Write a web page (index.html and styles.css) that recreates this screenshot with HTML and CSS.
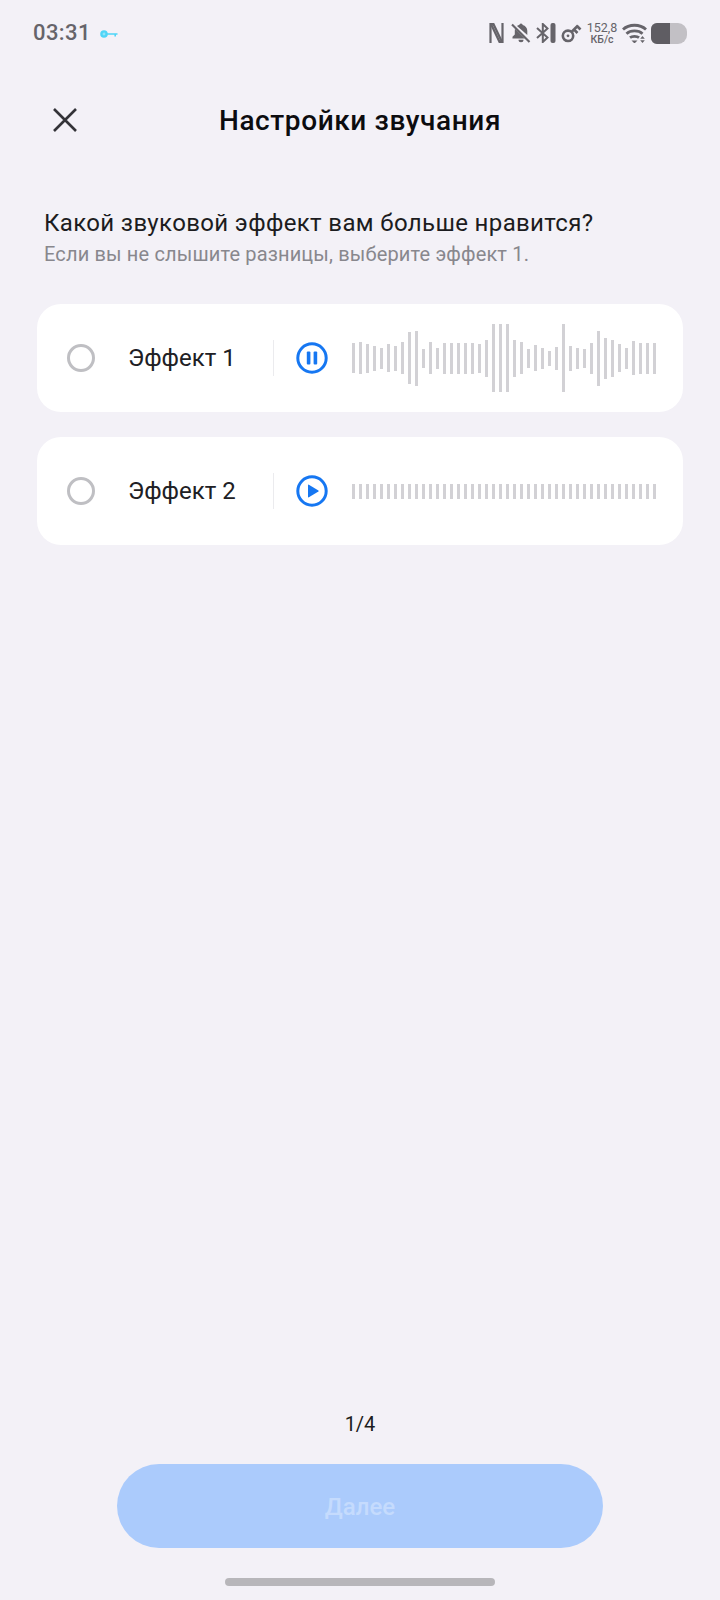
FILE: index.html
```html
<!DOCTYPE html>
<html lang="ru">
  <head>
    <meta charset="UTF-8" />
    <meta name="viewport" content="width=device-width, initial-scale=1.0" />
    <title>Настройки звучания</title>
    <link rel="stylesheet" href="styles.css">
  </head>
  <body>
    <div class="page">
      <!-- Status bar -->
      <div class="status-bar">
        <span class="time">03:31</span>
        <svg class="vpn-key" width="18" height="8" viewBox="0 0 18 8">
          <circle cx="4" cy="4" r="2.6" fill="#8fe4fa" stroke="#4fd5f7" stroke-width="2.4" />
          <path d="M7 3.2H17.5V4.8H16V6.6H14.4V4.8H7Z" fill="#4fd5f7" />
        </svg>
        <div class="status-icons">
          <svg width="15" height="20" viewBox="0 0 15 20" fill="none" stroke="#66646a" stroke-width="2.2">
            <path d="M1.5 20V1.2H4.5L13 19" />
            <path d="M13.5 0V18.8H10.500L2 1" />
          </svg>
          <svg class="gap-bell" width="20" height="20" viewBox="0 0 20 20" fill="#66646a">
            <path d="M10 .5a1.700 1.700 0 0 1 1.700 1.600c2.800.7 4.600 3 4.600 5.900v4L6 2.900c.7-.4 1.500-.7 2.300-.8A1.700 1.700 0 0 1 10 .5ZM4 5.700L13.800 15.500H1.500v-1.700l2.300-2.300V8c0-.8.100-1.600.2-2.300ZM7.500 16.800h5a2.500 2.500 0 0 1-5 0Z" />
            <path d="M1 1.500l17.500 17.500" fill="none" stroke="#66646a" stroke-width="2.2" />
          </svg>
          <svg class="gap-bt" width="20" height="20" viewBox="0 0 20 20" fill="none" stroke="#66646a" stroke-width="2">
            <path d="M1 5L11.500 14.500L6.800 19V1L11.500 5.500L1 15" />
            <rect x="14.500" y="0" width="5" height="20" rx="2" fill="#66646a" stroke="none" />
          </svg>
          <svg class="gap-key" width="21" height="20" viewBox="0 0 21 20" fill="none" stroke="#66646a" stroke-width="2.600">
            <circle cx="7" cy="12.800" r="5.200" />
            <circle cx="7" cy="12.800" r="1.400" fill="#66646a" stroke="none" />
            <path d="M10.500 9L17 2.500M13 6.500l3.500 3.500M16 3l3.500 3.500" />
          </svg>
          <div class="speed">
            <span>152,8</span>
            <span class="speed-unit">КБ/с</span>
          </div>
          <svg class="gap-wifi" width="25" height="20" viewBox="0 0 25 20" fill="none" stroke="#66646a" stroke-width="2.800">
            <path d="M1 6.500C7 .8 18 .8 24 6.500" />
            <path d="M4.500 10.800C8.500 7 16.500 7 20.500 10.800" />
            <path d="M8 14.600C10 13 15 13 17 14.600" />
            <path d="M9.500 17.500h6L12.500 20.500Z" fill="#66646a" stroke="none" />
            <path d="M20.500 13l2.300 2.700h-4.600ZM20.500 20l2.300-2.700h-4.600Z" fill="#66646a" stroke="none" />
          </svg>
          <div class="battery">
            <div class="battery-level"></div>
          </div>
        </div>
      </div>

      <!-- Header -->
      <div class="header">
        <svg class="close-icon" width="26" height="26" viewBox="0 0 26 26" fill="none" stroke="#333338" stroke-width="2.6">
          <path d="M2 2L24 24M24 2L2 24" />
        </svg>
        <h1 class="title">Настройки звучания</h1>
      </div>

      <div class="intro">
        <p class="question">Какой звуковой эффект вам больше нравится?</p>
        <p class="hint">Если вы не слышите разницы, выберите эффект 1.</p>
      </div>

      <!-- Effect 1 -->
      <div class="effect-card">
        <span class="radio"></span>
        <span class="effect-name">Эффект 1</span>
        <span class="divider"></span>
        <svg class="player-btn" width="32" height="32" viewBox="0 0 32 32">
          <circle cx="16" cy="16" r="14.200" fill="none" stroke="#1677f2" stroke-width="3" />
          <rect x="10.800" y="9.500" width="3.600" height="13" rx="1" fill="#1677f2" />
          <rect x="17.600" y="9.500" width="3.600" height="13" rx="1" fill="#1677f2" />
        </svg>
        <div class="wave">
          <span style="height:30px"></span><span style="height:32px"></span><span style="height:29px"></span><span style="height:25px"></span>
          <span style="height:21px"></span><span style="height:28px"></span><span style="height:25px"></span><span style="height:32px"></span>
          <span style="height:52px"></span><span style="height:55px"></span><span style="height:19px"></span><span style="height:32px"></span>
          <span style="height:21px"></span><span style="height:31px"></span><span style="height:31px"></span><span style="height:31px"></span>
          <span style="height:31px"></span><span style="height:31px"></span><span style="height:29px"></span><span style="height:37px"></span>
          <span style="height:68px"></span><span style="height:68px"></span><span style="height:68px"></span><span style="height:37px"></span>
          <span style="height:32px"></span><span style="height:19px"></span><span style="height:26px"></span><span style="height:21px"></span>
          <span style="height:15px"></span><span style="height:23px"></span><span style="height:68px"></span><span style="height:25px"></span>
          <span style="height:21px"></span><span style="height:19px"></span><span style="height:31px"></span><span style="height:55px"></span>
          <span style="height:41px"></span><span style="height:37px"></span><span style="height:28px"></span><span style="height:21px"></span>
          <span style="height:34px"></span><span style="height:31px"></span><span style="height:31px"></span><span style="height:31px"></span>
        </div>
      </div>

      <!-- Effect 2 -->
      <div class="effect-card">
        <span class="radio"></span>
        <span class="effect-name">Эффект 2</span>
        <span class="divider"></span>
        <svg class="player-btn" width="32" height="32" viewBox="0 0 32 32">
          <circle cx="16" cy="16" r="14.200" fill="none" stroke="#1677f2" stroke-width="3" />
          <path d="M12 10.200a.6.6 0 0 1 .9-.5L22.400 15.500a.6.6 0 0 1 0 1L12.900 22.300a.6.6 0 0 1-.9-.5Z" fill="#1677f2" />
        </svg>
        <div class="wave wave-flat">
          <span></span><span></span><span></span><span></span><span></span><span></span><span></span><span></span><span></span><span></span><span></span>
          <span></span><span></span><span></span><span></span><span></span><span></span><span></span><span></span><span></span><span></span><span></span>
          <span></span><span></span><span></span><span></span><span></span><span></span><span></span><span></span><span></span><span></span><span></span>
          <span></span><span></span><span></span><span></span><span></span><span></span><span></span><span></span><span></span><span></span><span></span>
        </div>
      </div>

      <!-- Footer -->
      <div class="footer">
        <div class="pager">1/4</div>
        <button class="next-btn">Далее</button>
        <div class="home-bar"></div>
      </div>
    </div>
  </body>
</html>
```

FILE: styles.css
```css
/* Basic Reset */
* {
  margin: 0;
  padding: 0;
  box-sizing: border-box;
}

body {
  font-family: Roboto, "Noto Sans", sans-serif;
  background-color: #f3f1f7;
}

.page {
  width: 720px;
  height: 1600px;
  display: flex;
  flex-direction: column;
  overflow: hidden;
}

/* Status bar */
.status-bar {
  height: 68px;
  padding: 22px 33px 0 33px;
  display: flex;
  align-items: flex-start;
}

.time {
  font-size: 22px;
  font-weight: 500;
  line-height: 22px;
  letter-spacing: 0.4px;
  color: #66646a;
}

.vpn-key {
  margin: 8px 0 0 9px;
}

.status-icons {
  margin-left: auto;
  display: flex;
  align-items: center;
  height: 22px;
}

.gap-bell {
  margin-left: 7px;
}

.gap-bt {
  margin-left: 5px;
}

.gap-key {
  margin-left: 5px;
}

.gap-wifi {
  margin-left: 6px;
}

.speed {
  margin-left: 6px;
  width: 28px;
  display: flex;
  flex-direction: column;
  align-items: center;
  font-size: 12.500px;
  line-height: 12px;
  color: #66646a;
  white-space: nowrap;
}

.speed-unit {
  font-size: 10.500px;
  line-height: 11px;
  font-weight: 500;
}

.battery {
  margin-left: 4px;
  width: 36px;
  height: 21px;
  border-radius: 6px 9px 9px 6px;
  background-color: #c2c0c5;
  overflow: hidden;
}

.battery-level {
  width: 19px;
  height: 100%;
  background-color: #5f5d63;
}

/* Header */
.header {
  position: relative;
  height: 106px;
  display: flex;
  align-items: center;
  justify-content: center;
}

.close-icon {
  position: absolute;
  left: 52px;
  top: 39px;
}

.title {
  font-size: 28px;
  font-weight: 500;
  letter-spacing: 0.6px;
  line-height: 34px;
  color: #0c0c0f;
}

.intro {
  padding: 32px 0 0 44px;
  height: 130px;
}

.question {
  font-size: 24px;
  letter-spacing: 0.36px;
  line-height: 34px;
  color: #1c1c20;
}

.hint {
  margin-top: 1px;
  font-size: 20px;
  letter-spacing: 0.15px;
  line-height: 26px;
  color: #88878d;
}

/* Effect cards */
.effect-card {
  margin: 0 37px 25px 37px;
  height: 108px;
  padding-left: 30px;
  background-color: white;
  border-radius: 24px;
  display: flex;
  align-items: center;
}

.radio {
  width: 28px;
  height: 28px;
  border: 3px solid #bfbfc3;
  border-radius: 50%;
  flex-shrink: 0;
}

.effect-name {
  margin-left: 33px;
  width: 145px;
  font-size: 24px;
  color: #202024;
}

.divider {
  width: 1px;
  height: 36px;
  background-color: #ebebee;
}

.player-btn {
  margin-left: 22px;
  flex-shrink: 0;
}

.wave {
  margin-left: 23.500px;
  display: flex;
  align-items: center;
  gap: 4px;
}

.wave span {
  width: 3px;
  background-color: #d2d1d5;
}

.wave-flat span {
  height: 15px;
}

/* Footer */
.footer {
  margin-top: auto;
  display: flex;
  flex-direction: column;
  align-items: center;
}

.pager {
  font-size: 20px;
  line-height: 24px;
  color: #1c1c20;
}

.next-btn {
  margin-top: 28px;
  padding-top: 2px;
  width: 486px;
  height: 84px;
  border: none;
  border-radius: 42px;
  background-color: #abcbfc;
  color: #c5dbfd;
  font-family: inherit;
  font-size: 24px;
  font-weight: 500;
}

.home-bar {
  margin: 30px 0 14px 0;
  width: 270px;
  height: 8px;
  border-radius: 4px;
  background-color: #b7b6ba;
}
```
